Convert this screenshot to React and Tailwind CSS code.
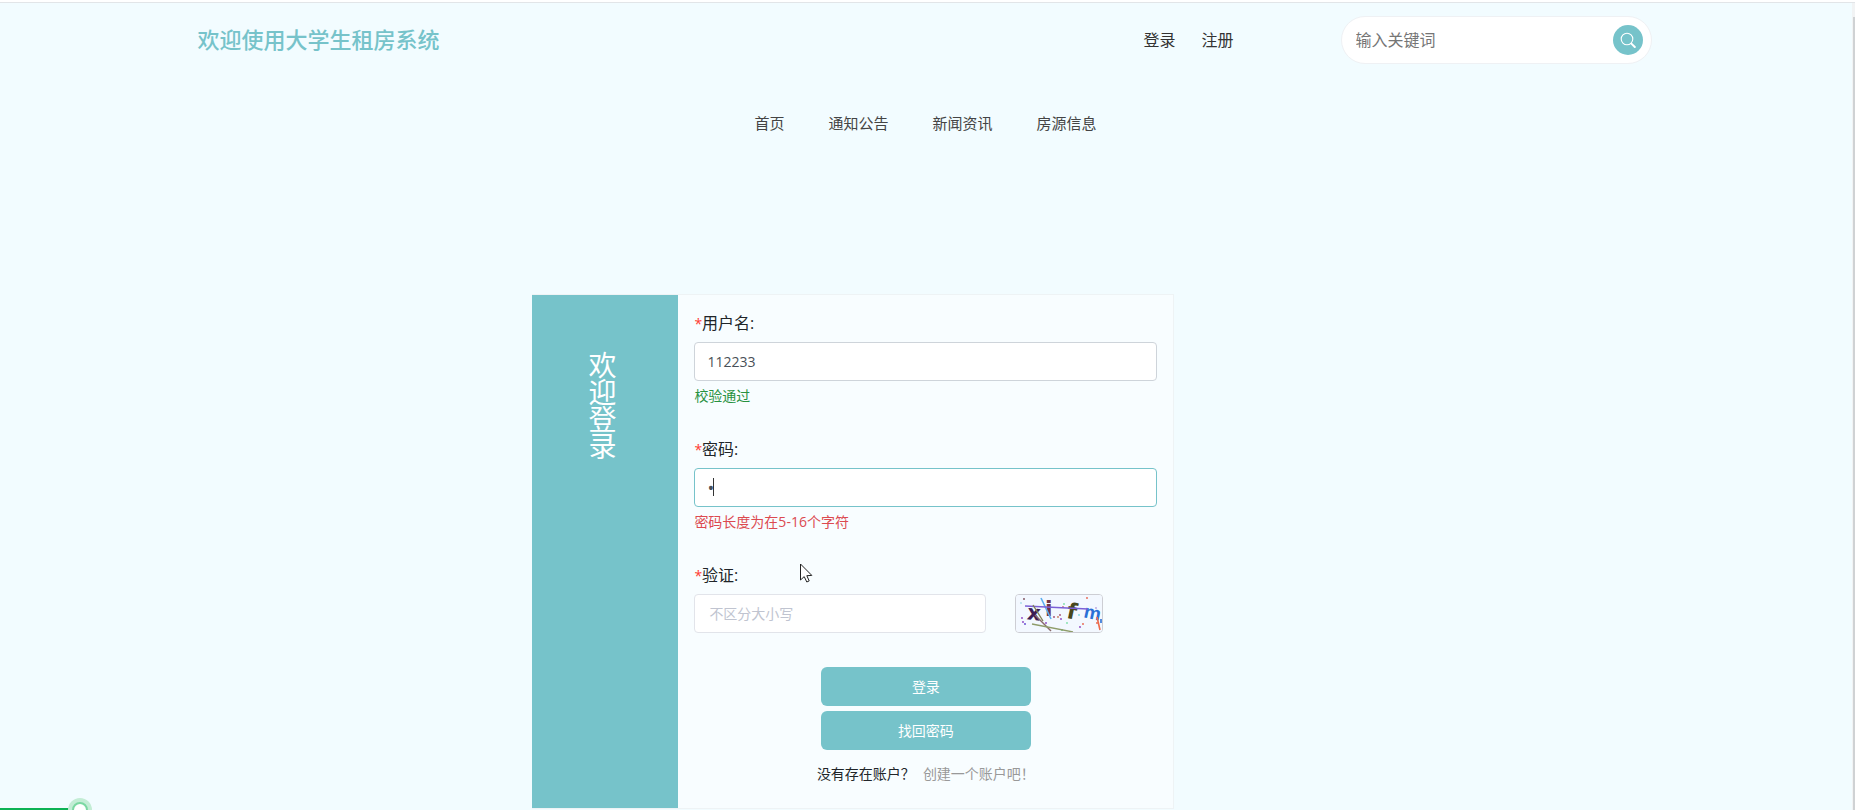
import React, { useState } from 'react';

const navItems = ['首页', '通知公告', '新闻资讯', '房源信息'];

// [x, y, colour]
const captchaDots = [
  [8, 4, '#7a4a55'], [5, 8, '#a8dce8'], [6, 23, '#8a3fc0'], [7, 27, '#8a3fc0'], [9, 29, '#5b3fd0'],
  [48, 9, '#7be0a8'], [47, 12, '#c06a80'], [38, 22, '#a04a70'], [42, 22, '#c87a5a'], [45, 24, '#8a3fc0'],
  [51, 28, '#7be0a8'], [30, 28, '#8a3fc0'], [63, 20, '#7fd6e0'], [64, 32, '#8a3fc0'], [67, 29, '#e8604a'],
  [71, 3, '#e8604a'], [80, 13, '#b7a0e0'], [81, 28, '#e8604a'], [46, 35, '#5fc07a'], [44, 20, '#a04a70'],
];

const SearchIcon = () => (
  <svg className="w-4 h-4" viewBox="0 0 16 16" fill="none" stroke="white" strokeLinecap="round">
    <circle cx="7" cy="7" r="5.8" strokeWidth="1.1" />
    <path d="M11.4 11.6 L14.8 15" strokeWidth="2" />
  </svg>
);

const Captcha = () => (
  <svg className="w-full h-full" viewBox="0 0 86 37" fontFamily="'DejaVu Sans', sans-serif" fontWeight="bold">
    <rect width="86" height="37" fill="#f3f8ff" />
    {captchaDots.map(([x, y, fill]) => (
      <circle key={`${x}-${y}`} cx={x} cy={y} r="0.9" fill={fill} />
    ))}
    <text x="11" y="25" fontSize="21" fill="#3a1c55" transform="rotate(6 17 20)">x</text>
    <text x="29" y="21" fontSize="22" fill="#6e3546">i</text>
    <text x="51" y="24" fontSize="22" fill="#47471c" transform="rotate(12 56 18)">f</text>
    <text x="68" y="24" fontSize="19" fontFamily="'Liberation Sans', sans-serif" fill="#2a6fd6" transform="rotate(12 76 18)">m</text>
    <path d="M25 3 L35 24" stroke="#5aaef0" strokeWidth="1.6" />
    <path d="M9 11 L72 14" stroke="#7a5fd6" strokeWidth="1.6" />
    <path d="M17 10 L27 26" stroke="#7d8055" strokeWidth="1.4" />
    <path d="M19 20 L35 36" stroke="#8a6a6a" strokeWidth="1.5" />
    <path d="M16 29 L57 37" stroke="#8f9c6a" strokeWidth="1.3" />
    <path d="M81 22 L84 35" stroke="#ee6a4a" strokeWidth="1.6" />
    <path d="M85 24 V28" stroke="#2a6fd6" strokeWidth="1.6" />
  </svg>
);

const Label = ({ htmlFor, children }) => (
  <label htmlFor={htmlFor} className="block h-6 leading-6 text-base text-[#212529]">
    <span className="text-sm text-[#ff3b30]">*</span>
    {children}:
  </label>
);

const inputClass = 'block w-full h-[39px] px-3 bg-white border rounded text-[#495057] outline-none';

const App = () => {
  const [username, setUsername] = useState('112233');
  const [password, setPassword] = useState('1');
  const [code, setCode] = useState('');

  return (
    <div className="relative min-h-screen overflow-hidden bg-[#f2fcff] border-t-2 border-white font-['Open_Sans','Noto_Sans_CJK_SC',sans-serif]">
      <div className="border-t border-[#e2e5e8] pr-1">
        <div className="max-w-[1456px] mx-auto">
          <header className="flex items-center justify-between pt-[13px] pr-0.5">
            <h1 className="text-[22px] leading-[30px] pb-0.5 text-[#76c3ca] font-medium">欢迎使用大学生租房系统</h1>
            <div className="flex items-center">
              <div className="flex gap-[26px] mr-[107px] text-base leading-6 text-[#333]">
                <a href="#login">登录</a>
                <a href="#register">注册</a>
              </div>
              <form
                role="search"
                onSubmit={(e) => e.preventDefault()}
                className="flex items-center w-[311px] h-12 pl-3.5 pr-2 bg-white border border-[#eff1f4] rounded-full"
              >
                <input
                  type="text"
                  aria-label="输入关键词"
                  placeholder="输入关键词"
                  className="flex-1 min-w-0 text-base leading-6 outline-none placeholder:text-[#757575]"
                />
                <button
                  type="submit"
                  aria-label="搜索"
                  className="flex items-center justify-center w-[30px] h-[30px] rounded-full bg-[#76c3ca]"
                >
                  <SearchIcon />
                </button>
              </form>
            </div>
          </header>

          <nav className="flex justify-center gap-11 mt-[47px] text-[15px] leading-6 text-[#444]">
            {navItems.map((item) => (
              <a key={item} href="#nav">{item}</a>
            ))}
          </nav>

          <main className="mt-[159px] pl-[23%]">
            <div className="flex w-[642px] max-w-full bg-[#f8fdff] border border-l-0 border-[#eef3f5]">
              <div className="flex justify-center w-[146px] shrink-0 pt-[57px] pr-1.5 bg-[#76c3ca]">
                <h2 className="w-7 text-[28px] leading-[27px] text-white">欢迎登录</h2>
              </div>

              <form onSubmit={(e) => e.preventDefault()} className="flex-1 px-4 pt-4 pb-6">
                <div className="h-[126px]">
                  <Label htmlFor="username">用户名</Label>
                  <input
                    id="username"
                    type="text"
                    value={username}
                    onChange={(e) => setUsername(e.target.value)}
                    className={`${inputClass} mt-[7px] text-sm border-[#ced4da]`}
                  />
                  <p className="mt-1 text-sm leading-[21px] text-[#28923f]">校验通过</p>
                </div>

                <div className="h-[126px]">
                  <Label htmlFor="password">密码</Label>
                  <div className="relative mt-[7px]">
                    <input
                      id="password"
                      type="password"
                      value={password}
                      onChange={(e) => setPassword(e.target.value)}
                      className={`${inputClass} text-lg border-[#76c3ca] caret-transparent`}
                    />
                    <span className="absolute left-[19px] top-2.5 w-px h-[18px] bg-[#333]" />
                  </div>
                  <p className="mt-1 text-sm leading-[21px] text-[#dc4a50]">密码长度为在5-16个字符</p>
                </div>

                <div className="relative">
                  <Label htmlFor="code">验证</Label>
                  <div className="flex items-center mt-[7px]">
                    <div className="w-[292px]">
                      <input
                        id="code"
                        type="text"
                        placeholder="不区分大小写"
                        value={code}
                        onChange={(e) => setCode(e.target.value)}
                        className={`${inputClass} px-3.5 text-sm border-[#e2e4ea] placeholder:text-[#c0c4d0]`}
                      />
                    </div>
                    <button
                      type="button"
                      aria-label="刷新验证码"
                      className="w-[88px] h-[39px] ml-[29px] border border-[#cdced4] rounded overflow-hidden"
                    >
                      <Captcha />
                    </button>
                  </div>
                  <svg className="absolute left-[105px] top-0 w-[15px] h-5" viewBox="0 0 15 20">
                    <path
                      d="M1.5 1 V17 L5.2 13.6 L7.8 19 L10.2 17.9 L7.8 12.7 L12.8 12.4 Z"
                      fill="white"
                      stroke="#222"
                      strokeWidth="1"
                    />
                  </svg>
                </div>

                <div className="flex flex-col items-center gap-[5px] mt-[34px]">
                  <button type="submit" className="w-[210px] h-[39px] rounded-md bg-[#76c3ca] text-sm text-white">
                    登录
                  </button>
                  <button type="button" className="w-[210px] h-[39px] rounded-md bg-[#76c3ca] text-sm text-white">
                    找回密码
                  </button>
                </div>

                <div className="flex justify-center gap-2 mt-[13px] text-sm leading-[21px]">
                  <span className="text-[#212529]">没有存在账户？</span>
                  <a href="#register" className="text-[#999]">创建一个账户吧！</a>
                </div>
              </form>
            </div>
          </main>
        </div>
      </div>

      {/* page scrollbar */}
      <div className="absolute right-0 top-px bottom-0 w-[3px] pt-3.5 pl-px bg-[#f1f3f4]">
        <div className="h-full bg-[#cfd2d4]" />
      </div>

      {/* playback progress */}
      <div className="absolute left-0 bottom-0 w-20 h-0.5 bg-[#0db254]">
        <div className="absolute -right-3 -top-2.5 w-6 h-6 p-1 rounded-full bg-[#c3edd5]">
          <div className="w-full h-full rounded-full border-2 border-[#7bd8a2] bg-white" />
        </div>
      </div>
    </div>
  );
};

export default App;
